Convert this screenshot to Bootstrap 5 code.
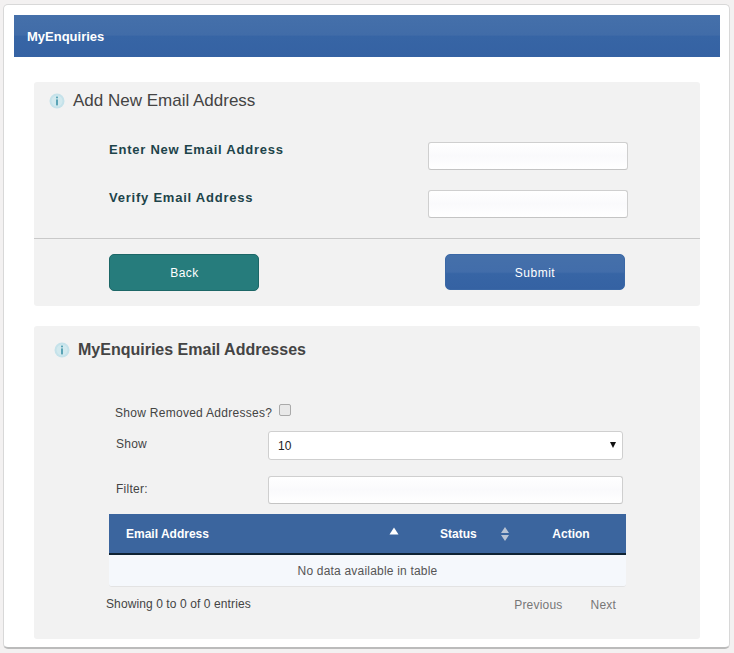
<!DOCTYPE html>
<html lang="en">
<head>
<meta charset="utf-8">
<title>MyEnquiries</title>
<link rel="stylesheet" href="https://cdn.jsdelivr.net/npm/bootstrap@5.3.0/dist/css/bootstrap.min.css">
<style>
html,body{height:653px;overflow:hidden}
body{background:#f3f1f1;font-family:"Liberation Sans",Arial,sans-serif;font-size:12px;color:#444;padding:4px 4px 0 3px}
.shell{background:#fff;border:1px solid #d8d8d8;border-bottom:2px solid #bbb;border-radius:5px;height:645px;padding:10px 9px 0 10px}
.topbar{height:42px;background:linear-gradient(#4570aa 0,#416ca8 48%,#3765a5 50%,#3562a3 100%);color:#fff;font-weight:700;font-size:13px;padding:2px 13px 0;display:flex;align-items:center}
.sheet{background:#f2f2f2;border-radius:3px;margin-left:20px;margin-right:20px}
.sheet-a{margin-top:25px;height:224px;padding-top:1px}
.sheet-b{margin-top:20px;height:313px}
.sect-head{font-size:16px;line-height:20px;color:#444;display:flex;align-items:center;gap:8px;margin:0;font-weight:400}
.sheet-a .sect-head{padding:8px 0 0 15px}
.sheet-a .sect-head span{font-size:17px}
.sheet-b .sect-head{padding:14px 0 0 20px;font-weight:700}
.info-ic{width:16px;height:16px;flex:none}
.entry-row{display:flex;justify-content:space-between;align-items:flex-start;padding-left:75px;padding-right:72px}
.entry-row label{font-weight:700;font-size:13px;color:#1d444a;letter-spacing:.77px;line-height:16px}
.soft-input.form-control{width:200px;height:28px;min-height:0;padding:0 8px;border:1px solid #cfcfcf;border-bottom-color:#c4c4c4;border-radius:3px;background:linear-gradient(#fff 0,#fafafc 50%,#fff 100%);box-shadow:none}
.gap-first{margin-top:31px}
.gap-second{margin-top:20px}
.rule{height:1px;background:#c9c9c9;margin:20px 0 0}
.action-row{display:flex;justify-content:space-between;padding:15px 75px 0 75px}
.act-btn.btn{height:37px;font-size:12px;letter-spacing:.5px;color:#fff;border-radius:5px;padding:1px 0 0;line-height:35px;font-family:"Liberation Sans",Arial,sans-serif}
.btn-teal{width:150px;background:#267c7c;border:1px solid #1d6767}
.btn-teal span{margin-left:1px}
.btn-blue{width:180px;height:36px!important;background:linear-gradient(#4570aa 0,#426daa 50%,#3765a5 55%,#3562a3 100%);border:1px solid #3b68a6}
.removed-row{display:flex;align-items:center;padding:42px 0 0 81px;height:62px;letter-spacing:.28px;color:#444}
.removed-row label{margin-top:2px}
.removed-row .form-check-input{width:12px;height:12px;margin:-4px 0 0 7px;background-color:#e9e9e9;border:1px solid #aaa;border-radius:2px;flex:none}
.field-row{display:flex;align-items:center;padding:0 0 0 82px;margin-right:77px}
.field-row label{width:152px;letter-spacing:.25px;margin-top:-3px}
.field-row .form-select{flex:1;width:auto;height:29px;padding:0 0 0 9px;font-size:12px;color:#222;border:1px solid #cfcfcf;border-radius:3px;background-color:#fff;font-family:"Liberation Sans",Arial,sans-serif;background-image:none}
.select-wrap{flex:1;position:relative;display:flex}
.caret-down{position:absolute;right:7px;top:11px;width:0;height:0;border-left:3.5px solid transparent;border-right:3.5px solid transparent;border-top:6px solid #111}
.field-row .soft-input.form-control{flex:1;width:auto}
.row-select{margin-top:9px}
.row-filter{margin-top:16px}
.table-wrap{margin:10px 74px 0 75px}
.mail-table.table{margin:0;font-size:12px;border-collapse:separate;border-spacing:0;table-layout:fixed;width:517px}
.mail-table thead th{background:#3b659e;color:#fff;height:41px;padding:0;border-bottom:2px solid #0e2233;font-weight:700;vertical-align:middle;position:relative;box-shadow:none}
.mail-table tbody td{background:#f5f8fc;color:#555;text-align:center;height:32px;padding:0;border-bottom:1px solid #e3e3e3;vertical-align:middle;letter-spacing:.2px;border-radius:0 0 3px 3px}
.col-mail{width:307px;padding-left:17px!important}
.col-state{width:100px;padding-left:24px!important}
.col-act{width:110px;text-align:center}
.sort-ic{position:absolute}
.sort-up{right:17px;top:13px}
.sort-both{right:6px;top:12px}
.foot-row{display:flex;justify-content:space-between;padding:0 84px 0 72px;align-items:center;height:34px;letter-spacing:.1px}
.pager{display:flex;gap:28px;color:#777;margin-top:2px;letter-spacing:.2px}
</style>
</head>
<body>
<div class="shell">
  <div class="topbar">MyEnquiries</div>
  <div class="sheet sheet-a">
    <h2 class="sect-head">
      <svg class="info-ic" viewBox="0 0 16 16"><circle cx="8" cy="8" r="7.5" fill="#c5e2ea"/><circle cx="8" cy="8" r="5.5" fill="#d2e9ee"/><rect x="7.2" y="3.6" width="1.6" height="1.7" fill="#3f93a8"/><rect x="7.2" y="6.4" width="1.6" height="6" fill="#3f93a8"/></svg>
      <span>Add New Email Address</span>
    </h2>
    <div class="entry-row gap-first"><label for="e1">Enter New Email Address</label><input id="e1" class="form-control soft-input" type="text"></div>
    <div class="entry-row gap-second"><label for="e2">Verify Email Address</label><input id="e2" class="form-control soft-input" type="text"></div>
    <div class="rule"></div>
    <div class="action-row">
      <button type="button" class="btn act-btn btn-teal"><span>Back</span></button>
      <button type="button" class="btn act-btn btn-blue">Submit</button>
    </div>
  </div>
  <div class="sheet sheet-b">
    <h2 class="sect-head">
      <svg class="info-ic" viewBox="0 0 16 16"><circle cx="8" cy="8" r="7.5" fill="#c5e2ea"/><circle cx="8" cy="8" r="5.5" fill="#d2e9ee"/><rect x="7.2" y="3.6" width="1.6" height="1.7" fill="#3f93a8"/><rect x="7.2" y="6.4" width="1.6" height="6" fill="#3f93a8"/></svg>
      <span>MyEnquiries Email Addresses</span>
    </h2>
    <div class="removed-row"><label for="rm">Show Removed Addresses?</label><input id="rm" class="form-check-input" type="checkbox"></div>
    <div class="field-row row-select"><label for="sh">Show</label>
      <div class="select-wrap"><select id="sh" class="form-select"><option>10</option></select><span class="caret-down"></span></div>
    </div>
    <div class="field-row row-filter"><label for="fl">Filter:</label><input id="fl" class="form-control soft-input" type="text"></div>
    <div class="table-wrap">
      <table class="table mail-table">
        <thead><tr>
          <th class="col-mail">Email Address<svg class="sort-ic sort-up" width="10" height="8" viewBox="0 0 10 8"><path d="M5 0.5 9.5 7.5H.5z" fill="#fff"/></svg></th>
          <th class="col-state">Status<svg class="sort-ic sort-both" width="10" height="16" viewBox="0 0 10 16"><path d="M5 1 9 7H1z M1 9H9L5 15z" fill="#b9c4d4"/></svg></th>
          <th class="col-act">Action</th>
        </tr></thead>
        <tbody><tr><td colspan="3">No data available in table</td></tr></tbody>
      </table>
    </div>
    <div class="foot-row"><div>Showing 0 to 0 of 0 entries</div><div class="pager"><span>Previous</span><span>Next</span></div></div>
  </div>
</div>
<script src="https://cdn.jsdelivr.net/npm/bootstrap@5.3.0/dist/js/bootstrap.bundle.min.js"></script>
</body>
</html>
